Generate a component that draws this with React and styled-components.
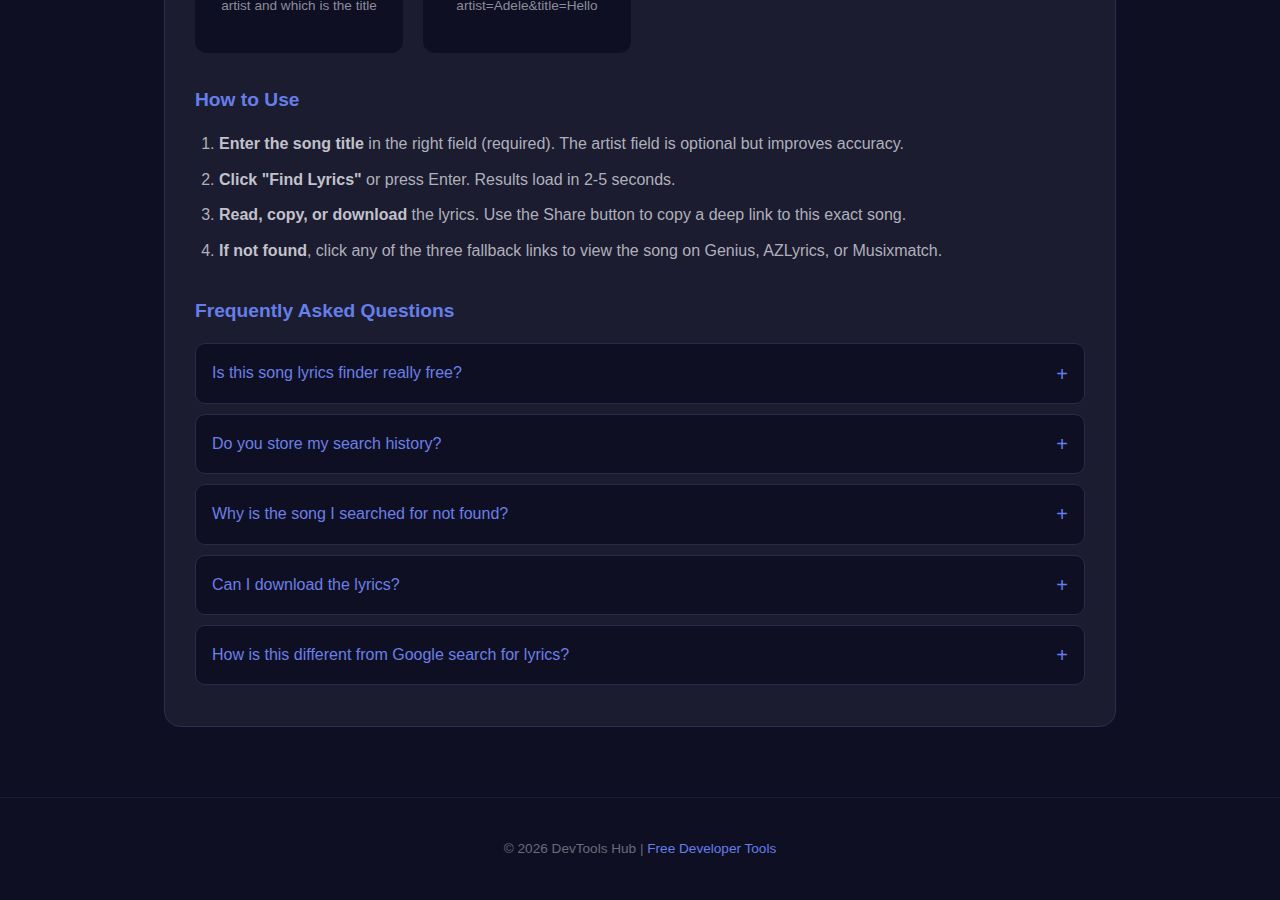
import React from 'react'
import styled, { createGlobalStyle } from 'styled-components'

const GlobalStyle = createGlobalStyle`
    * { box-sizing: border-box; }
    body {
        margin: 0;
        background: #0e0f23;
        font-family: "Liberation Sans", Arial, sans-serif;
        color: #b0b0bc;
    }
`

const Page = styled.div`
    display: flex;
    flex-direction: column;
    min-height: 900px;
    overflow: hidden;
`

const Panel = styled.main`
    width: 952px;
    margin: -55px auto 0;
    background: #1b1c2f;
    border: 1px solid #2c2d52;
    border-radius: 16px;
    padding: 30px 30px 31px;
`

const CardRow = styled.div`
    display: flex;
    gap: 20px;
`

const Card = styled.div`
    width: 208px;
    height: 77px;
    background: #0e0f23;
    border-radius: 12px;
    padding: 20px 10px 0;
    text-align: center;
    font-size: 13.6px;
    line-height: 20px;
    color: #8c8c9a;
`

const Heading = styled.h2`
    margin: ${p => p.$top}px 0 ${p => p.$bottom}px;
    font-size: 19.2px;
    line-height: 22px;
    font-weight: 700;
    color: #667eea;
`

const Steps = styled.ol`
    margin: 0;
    padding-left: 24px;
`

const Step = styled.li`
    font-size: 16px;
    line-height: 1.6;
    margin-bottom: 10px;
    color: #b0b0bc;
    &:last-child { margin-bottom: 0; }
    strong { color: #c2c2cc; }
`

const Faq = styled.div`
    display: flex;
    align-items: center;
    justify-content: space-between;
    background: #0e0f23;
    border: 1px solid #2a2b4c;
    border-radius: 10px;
    padding: 18px 16px;
    margin-bottom: 10px;
    font-size: 16px;
    line-height: 22.4px;
    color: #6c7fe6;
`

const Plus = styled.span`
    font-size: 20px;
    line-height: 20px;
    color: #667eea;
`

const Footer = styled.footer`
    margin-top: 70px;
    border-top: 1px solid #1d1e34;
    padding: 41px 20px 40px;
    text-align: center;
    font-size: 13.6px;
    line-height: 20px;
    color: #6b6b78;
    a { color: #667eea; text-decoration: none; }
`

const steps = [
    ['Enter the song title', ' in the right field (required). The artist field is optional but improves accuracy.'],
    ['Click "Find Lyrics"', ' or press Enter. Results load in 2-5 seconds.'],
    ['Read, copy, or download', ' the lyrics. Use the Share button to copy a deep link to this exact song.'],
    ['If not found', ', click any of the three fallback links to view the song on Genius, AZLyrics, or Musixmatch.'],
]

const faqs = [
    'Is this song lyrics finder really free?',
    'Do you store my search history?',
    'Why is the song I searched for not found?',
    'Can I download the lyrics?',
    'How is this different from Google search for lyrics?',
]

export default function App() {
    return (
        <Page>
            <GlobalStyle />
            <Panel>
                <CardRow>
                    <Card>artist and which is the title</Card>
                    <Card>artist=Adele&amp;title=Hello</Card>
                </CardRow>
                <Heading $top={36} $bottom={20}>How to Use</Heading>
                <Steps>
                    {steps.map(([b, rest]) => (
                        <Step key={b}><strong>{b}</strong>{rest}</Step>
                    ))}
                </Steps>
                <Heading $top={37} $bottom={21}>Frequently Asked Questions</Heading>
                {faqs.map(q => (
                    <Faq key={q}>
                        <span>{q}</span>
                        <Plus>+</Plus>
                    </Faq>
                ))}
            </Panel>
            <Footer>
                © 2026 DevTools Hub | <a href="#">Free Developer Tools</a>
            </Footer>
        </Page>
    )
}
